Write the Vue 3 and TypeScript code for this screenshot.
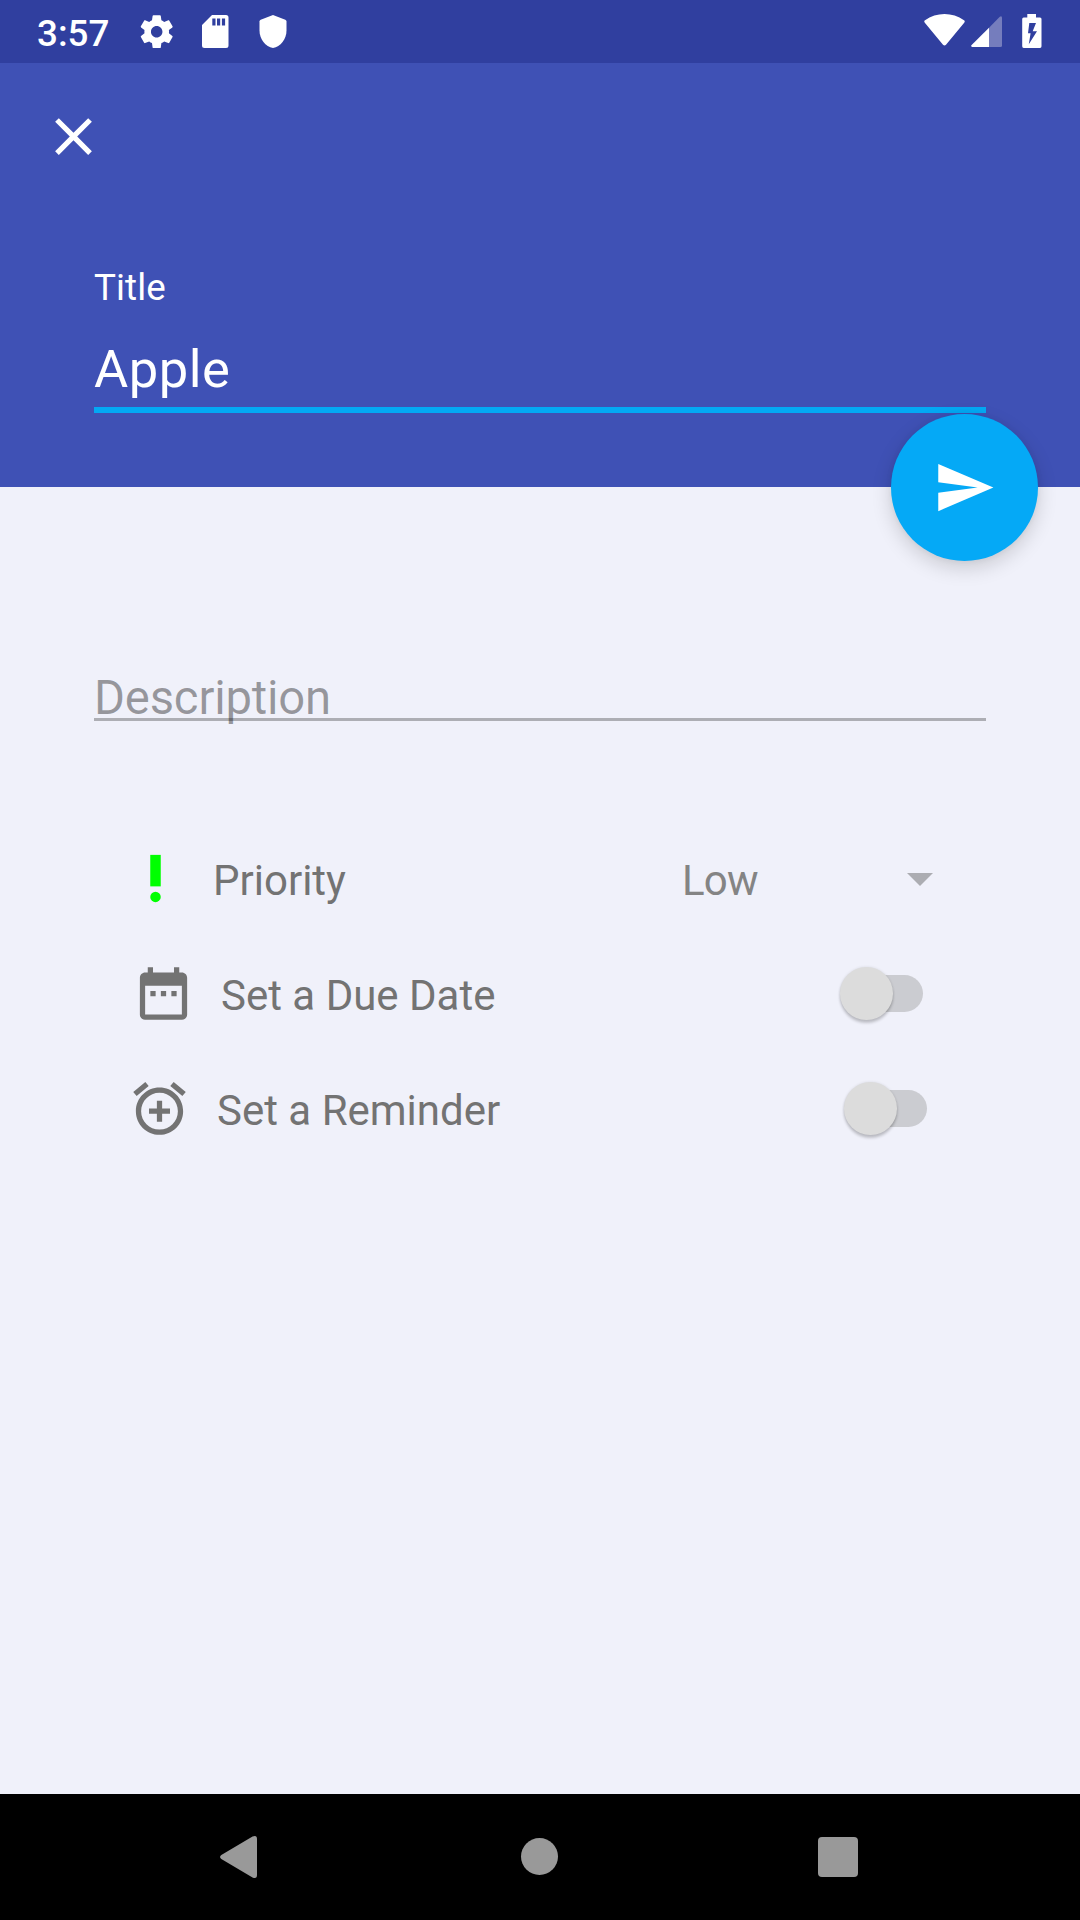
<script setup lang="ts">
import { ref } from 'vue'

const title = ref('Apple')
const priority = ref('Low')

const toggles = ref([
  { id: 'due', label: 'Set a Due Date', on: false },
  { id: 'reminder', label: 'Set a Reminder', on: false },
])

const icons: Record<string, string> = {
  due: 'M9 11H7v2h2v-2zm4 0h-2v2h2v-2zm4 0h-2v2h2v-2zm2-7h-1V2h-2v2H8V2H6v2H5c-1.11 0-1.99.9-1.99 2L3 20c0 1.1.89 2 2 2h14c1.1 0 2-.9 2-2V6c0-1.1-.9-2-2-2zm0 16H5V9h14v11z',
  reminder:
    'M7.88 3.39L6.6 1.86 2 5.71l1.29 1.53 4.59-3.85zM22 5.72l-4.6-3.86-1.29 1.53 4.6 3.86L22 5.72zM12 4c-4.97 0-9 4.03-9 9s4.02 9 9 9c4.97 0 9-4.03 9-9s-4.03-9-9-9zm0 16c-3.87 0-7-3.13-7-7s3.13-7 7-7 7 3.13 7 7-3.13 7-7 7zm1-11h-2v3H8v2h3v3h2v-3h3v-2h-3V9z',
}
</script>

<template>
  <div class="screen">
    <div class="status">
      <span class="clock">3:57</span>
      <svg class="gear" viewBox="0 0 24 24">
        <path d="M19.43 12.98c.04-.32.07-.64.07-.98s-.03-.66-.07-.98l2.11-1.65c.19-.15.24-.42.12-.64l-2-3.46c-.12-.22-.39-.3-.61-.22l-2.49 1c-.52-.4-1.08-.73-1.69-.98l-.38-2.65C14.46 2.18 14.25 2 14 2h-4c-.25 0-.46.18-.49.42l-.38 2.65c-.61.25-1.17.59-1.69.98l-2.49-1c-.23-.09-.49 0-.61.22l-2 3.46c-.13.22-.07.49.12.64l2.11 1.65c-.04.32-.07.65-.07.98s.03.66.07.98l-2.11 1.65c-.19.15-.24.42-.12.64l2 3.46c.12.22.39.3.61.22l2.49-1c.52.4 1.08.73 1.69.98l.38 2.65c.03.24.24.42.49.42h4c.25 0 .46-.18.49-.42l.38-2.65c.61-.25 1.17-.59 1.69-.98l2.49 1c.23.09.49 0 .61-.22l2-3.46c.12-.22.07-.49-.12-.64l-2.11-1.65zM12 15.5c-1.93 0-3.5-1.57-3.5-3.5s1.57-3.5 3.5-3.5 3.5 1.57 3.5 3.5-1.57 3.5-3.5 3.5z" />
      </svg>
      <svg class="sd" viewBox="0 0 27 33">
        <path fill-rule="evenodd" d="M10 0H24Q26.500 0 26.500 2.500V30.500Q26.500 33 24 33H2.500Q0 33 0 30.500V10ZM10.300 3.500V10.500H13.500V3.500ZM15 3.500V10.500H18.200V3.500ZM19.900 3.500V10.500H23.100V3.500Z" />
      </svg>
      <svg class="shield" viewBox="0 0 28 33">
        <path d="M14 0L26.300 4.700Q27.500 5.200 27.500 6.500V15.500C27.500 24.500 21.500 31.500 14 33C6.500 31.500 .5 24.500 .5 15.500V6.500Q.5 5.200 1.700 4.700Z" />
      </svg>
      <span class="grow"></span>
      <svg class="wifi" viewBox="0 0 41 32">
        <path d="M.8 8.800Q-.4 7.300 1 6.300C12.500-2 28.500-2 40 6.300Q41.400 7.300 40.200 8.800L22 30.800Q20.500 32.300 19 30.800Z" />
      </svg>
      <svg class="signal" viewBox="0 0 31 31">
        <path class="dim" d="M18 11.700L28.800.8Q31 -.6 31 2V29.500Q31 31 29.500 31H18Z" />
        <path d="M18 11.700V31H1.200Q-.5 30.600 .4 29.200Z" />
      </svg>
      <svg class="battery" viewBox="0 0 20 34">
        <path fill-rule="evenodd" d="M5.300 0H14V3.500H18Q19.500 3.500 19.500 5V32.300Q19.500 34 18 34H1.700Q.2 34 .2 32.300V5Q.2 3.500 1.700 3.500H5.300ZM7.300 9L6 19.300H8.600L6.800 30.200L15 17.300H10.700L14 9Z" />
      </svg>
    </div>

    <header class="header">
      <svg class="close" viewBox="0 0 24 24">
        <path d="M19 6.410L17.590 5 12 10.590 6.410 5 5 6.410 10.590 12 5 17.590 6.410 19 12 13.410 17.590 19 19 17.590 13.410 12z" />
      </svg>
      <div class="caption">Title</div>
      <div class="title">{{ title }}</div>
      <button class="fab" aria-label="Save">
        <svg viewBox="0 0 24 24"><path d="M2.010 21L23 12 2.010 3 2 10l15 2-15 2z" /></svg>
      </button>
    </header>

    <main class="body">
      <div class="description">Description</div>
      <div class="rows">
        <div class="row priority">
          <svg class="icon bang" viewBox="0 0 24 24"><path d="M10 3h4v12h-4z" /><circle cx="12" cy="19" r="2" /></svg>
          <span class="label">Priority</span>
          <span class="value">{{ priority }}</span>
          <svg class="caret" viewBox="0 0 26 13"><path d="M0 0H26L13 13Z" /></svg>
        </div>
        <div v-for="t in toggles" :key="t.id" class="row" :class="t.id">
          <svg class="icon" viewBox="0 0 24 24"><path :d="icons[t.id]" /></svg>
          <span class="label">{{ t.label }}</span>
          <span class="switch" role="switch" :aria-checked="t.on" @click="t.on = !t.on">
            <span class="thumb"></span>
          </span>
        </div>
      </div>
    </main>

    <nav class="nav">
      <svg class="back" viewBox="0 0 37 42"><path d="M1.300 19L32.500.6Q37-1.200 37 3V39Q37 43.200 32.500 41.400L1.300 23Q-1.200 21 1.300 19Z" /></svg>
      <span class="home"></span>
      <span class="recent"></span>
    </nav>
  </div>
</template>

<style>
body {
  margin: 0;
}
</style>

<style scoped>
.screen {
  width: 1080px;
  height: 1920px;
  display: flex;
  flex-direction: column;
  background: #f0f1fa;
  font-family: Roboto, "Liberation Sans", sans-serif;
  overflow: hidden;
}
svg {
  display: block;
  flex: none;
}
.status {
  box-sizing: border-box;
  height: 63px;
  padding: 0 38px 0 37px;
  display: flex;
  align-items: center;
  background: #303f9f;
  fill: #fff;
}
.clock {
  width: 100px;
  padding-top: 5px;
  font-size: 36.750px;
  line-height: 44px;
  font-weight: 500;
  color: #fff;
}
.gear {
  width: 39.400px;
  height: 39.400px;
}
.sd {
  width: 27px;
  height: 33px;
  margin-left: 25.600px;
}
.shield {
  width: 28px;
  height: 33px;
  margin-left: 30px;
}
.grow {
  flex: 1;
}
.wifi {
  width: 41px;
  height: 32px;
  margin-top: -3px;
  margin-right: 6px;
}
.signal {
  width: 31px;
  height: 31px;
  margin-right: 20px;
}
.dim {
  fill: #757dbd;
}
.battery {
  width: 20px;
  height: 34px;
  margin-top: -1px;
}
.header {
  position: relative;
  box-sizing: border-box;
  height: 424px;
  padding: 42px 94px 0;
  background: #3f51b5;
  color: #fff;
}
.close {
  width: 63px;
  height: 63px;
  margin-left: -52px;
  fill: #fff;
}
.caption {
  margin-top: 98px;
  font-size: 36.750px;
  line-height: 44px;
  letter-spacing: 0.1px;
}
.title {
  box-sizing: border-box;
  height: 91px;
  margin-top: 12px;
  padding-top: 16px;
  border-bottom: 6px solid #03a9f4;
  font-size: 52.500px;
  line-height: 62px;
  letter-spacing: 0.5px;
}
.fab {
  position: absolute;
  right: 42px;
  bottom: -74px;
  width: 147px;
  height: 147px;
  padding: 0;
  border: 0;
  border-radius: 50%;
  display: flex;
  align-items: center;
  justify-content: center;
  background: #05a9f6;
  box-shadow: 0 7px 20px rgba(0, 0, 0, 0.16), 0 0 6px rgba(0, 0, 0, 0.06);
}
.fab svg {
  width: 63px;
  height: 63px;
  fill: #fff;
}
.body {
  flex: 1;
  padding: 182px 94px 0;
}
.description {
  height: 49px;
  border-bottom: 3px solid rgba(0, 0, 0, 0.28);
  font-size: 47.250px;
  line-height: 58px;
  letter-spacing: -0.2px;
  color: rgba(0, 0, 0, 0.38);
}
.rows {
  margin-top: 100px;
}
.row {
  display: flex;
  align-items: center;
  height: 115px;
  font-size: 42px;
  line-height: 50px;
  color: #737373;
}
.icon {
  width: 63px;
  height: 63px;
  fill: #737373;
}
.bang {
  fill: #0f0;
}
.label,
.value {
  padding-top: 4px;
}
.priority {
  padding: 0 53.500px 0 30px;
}
.priority .label {
  width: 469px;
  margin-left: 26px;
}
.value {
  flex: 1;
  letter-spacing: -0.8px;
  color: #848484;
}
.caret {
  width: 26px;
  height: 13px;
  margin-top: 2px;
  fill: #acadb2;
}
.due {
  padding: 0 63px 0 38px;
}
.reminder {
  padding: 0 59px 0 34px;
}
.due .label,
.reminder .label {
  flex: 1;
  margin-left: 26px;
}
.switch {
  width: 79px;
  height: 37px;
  border-radius: 19px;
  background: #cbccd1;
  display: flex;
  align-items: center;
}
.thumb {
  flex: none;
  width: 52.500px;
  height: 52.500px;
  margin-left: -4px;
  border-radius: 50%;
  background: #dcdcdc;
  box-shadow: 0 3px 3px rgba(0, 0, 0, 0.2), 0 0 3px rgba(0, 0, 0, 0.1);
}
.nav {
  box-sizing: border-box;
  height: 126px;
  padding: 0 222px 0 220px;
  display: flex;
  align-items: center;
  background: #000;
}
.back {
  width: 37px;
  height: 42px;
  fill: #999;
}
.home {
  width: 37px;
  height: 37px;
  margin: -1px auto 0 264px;
  border-radius: 50%;
  background: #999;
}
.recent {
  width: 40px;
  height: 40px;
  border-radius: 4px;
  background: #999;
}
</style>
